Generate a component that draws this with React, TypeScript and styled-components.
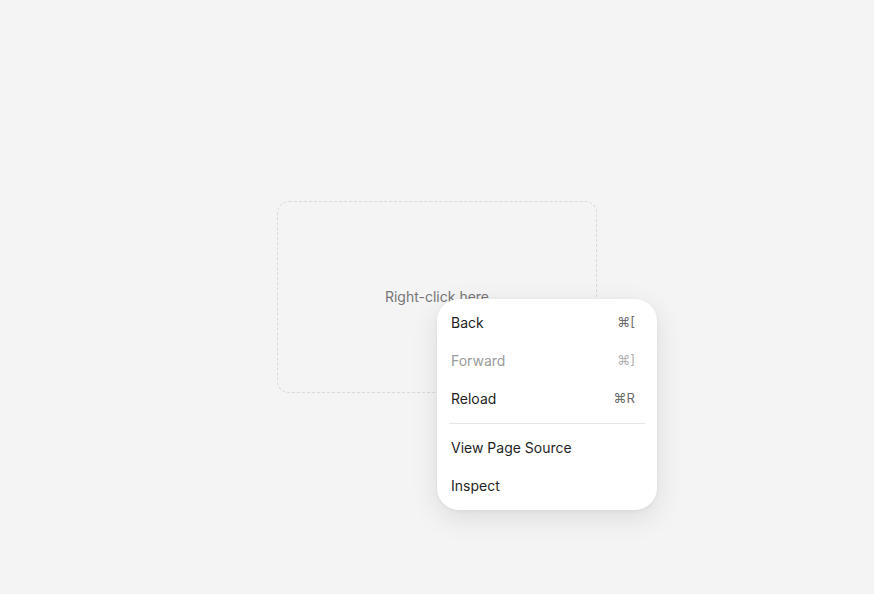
import React from "react";
import styled, { createGlobalStyle } from "styled-components";

const Global = createGlobalStyle`
  html, body { margin: 0; padding: 0; }
  body {
    background: #f4f4f4;
    font-family: Inter, "Noto Sans", "DejaVu Sans", sans-serif;
    -webkit-font-smoothing: antialiased;
  }
`;

const Page = styled.div`
  width: 100vw;
  height: 100vh;
  display: flex;
  align-items: center;
  justify-content: center;
  position: relative;
  overflow: hidden;
`;

const Target = styled.div`
  width: 320px;
  height: 192px;
  box-sizing: border-box;
  border: 1px dashed #d9d9d9;
  border-radius: 12px;
  display: flex;
  align-items: center;
  justify-content: center;
  padding-bottom: 2px;
  color: #767676;
  font-size: 14px;
`;

const Menu = styled.div<{ $x: number; $y: number }>`
  position: absolute;
  left: ${(p) => p.$x}px;
  top: ${(p) => p.$y}px;
  width: 220px;
  box-sizing: border-box;
  padding: 5px 6px;
  background: #ffffff;
  border-radius: 22px;
  box-shadow: 0 8px 28px rgba(0, 0, 0, 0.1), 0 1px 4px rgba(0, 0, 0, 0.05);
  display: flex;
  flex-direction: column;
`;

const Item = styled.div<{ $disabled?: boolean }>`
  height: 38px;
  box-sizing: border-box;
  display: flex;
  align-items: center;
  justify-content: space-between;
  padding: 0 16px 2px 8px;
  font-size: 14px;
  color: ${(p) => (p.$disabled ? "#9a9a9a" : "#1f1f1f")};
`;

const Shortcut = styled.span<{ $disabled?: boolean }>`
  font-size: 13px;
  color: ${(p) => (p.$disabled ? "#b0b0b0" : "#6b6b6b")};
`;

const Separator = styled.div`
  height: 1px;
  background: #e6e6e6;
  margin: 5px 6px;
`;

type Entry = { label: string; shortcut?: string; disabled?: boolean } | "sep";

const entries: Entry[] = [
  { label: "Back", shortcut: "⌘[" },
  { label: "Forward", shortcut: "⌘]", disabled: true },
  { label: "Reload", shortcut: "⌘R" },
  "sep",
  { label: "View Page Source" },
  { label: "Inspect" },
];

export default function App() {
  return (
    <>
      <Global />
      <Page>
        <Target>Right-click here</Target>
        <Menu $x={437} $y={299}>
          {entries.map((e, i) =>
            e === "sep" ? (
              <Separator key={i} />
            ) : (
              <Item key={i} $disabled={e.disabled}>
                <span>{e.label}</span>
                {e.shortcut && <Shortcut $disabled={e.disabled}>{e.shortcut}</Shortcut>}
              </Item>
            )
          )}
        </Menu>
      </Page>
    </>
  );
}
